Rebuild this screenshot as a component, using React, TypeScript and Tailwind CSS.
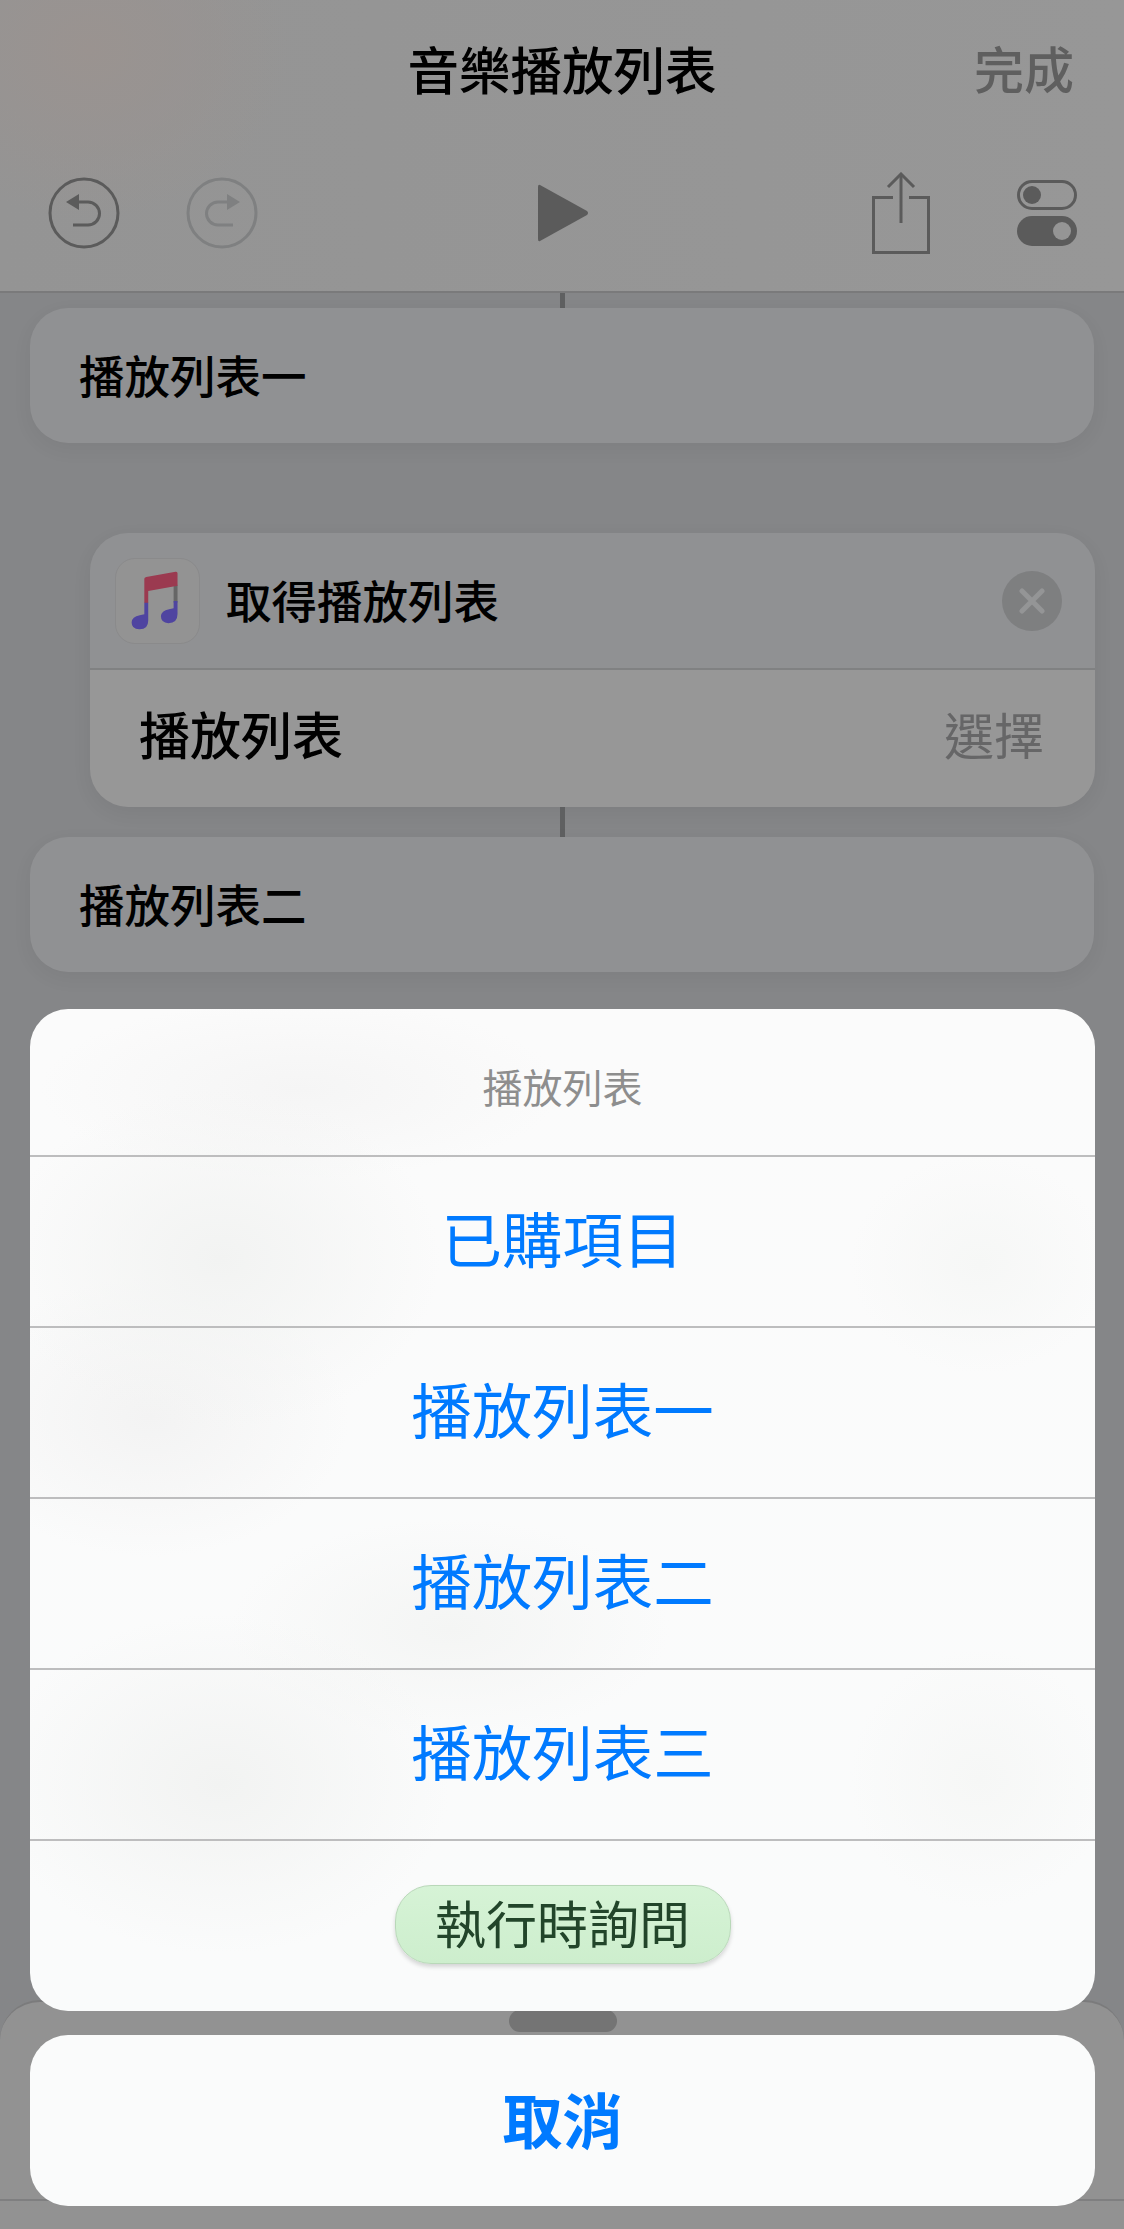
const sans = "font-['Noto_Sans_CJK_TC','Noto_Sans',sans-serif]";

function UndoIcon({ flip, color }: { flip?: boolean; color: string }) {
  return (
    <svg width="72" height="72" viewBox="0 0 72 72" fill="none" stroke={color} strokeWidth="3" className={flip ? "-scale-x-100" : ""}>
      <circle cx="36" cy="36" r="34" />
      <path d="M24 25 H40 a11.500 11.500 0 0 1 0 23 H25" />
      <path d="M18 25 L31 17 V33 Z" fill={color} stroke="none" />
    </svg>
  );
}

function ShareIcon() {
  return (
    <svg width="58" height="82" viewBox="0 0 58 82" fill="none" stroke="#5b5b5b" strokeWidth="3">
      <path d="M21 25.500 H1.500 V80.500 H56.500 V25.500 H37" />
      <path d="M29 2 V51" />
      <path d="M16 15 L29 2 L42 15" />
    </svg>
  );
}

function TogglesIcon() {
  return (
    <svg width="60" height="66" viewBox="0 0 60 66" fill="none">
      <rect x="1.500" y="1.500" width="57" height="27" rx="13.500" stroke="#5b5b5b" strokeWidth="3" />
      <circle cx="15" cy="15" r="9" fill="#5b5b5b" />
      <rect x="0" y="36" width="60" height="30" rx="15" fill="#5b5b5b" />
      <circle cx="45" cy="51" r="9" fill="#959595" />
    </svg>
  );
}

function MusicIcon() {
  return (
    <div className="w-[85px] h-[86px] rounded-[20px] bg-[#939393] border border-[#8a8a8b] flex items-center justify-center shrink-0">
      <svg width="85" height="86" viewBox="45 52 255 256">
        <rect x="222" y="130" width="12" height="55" fill="#666666" />
        <path d="M132 186 V112 Q132 107 138 106 L228 90 Q234 89 234 95 V133 L144 149 V186 Z" fill="#9b3a50" />
        <path d="M132 185 H144 V240 Q144 268 116 267 Q93 266 93 246 Q94 228 118 224 L132 221 Z" fill="#4f44a0" />
        <path d="M222 180 H234 V220 Q234 248 206 248 Q183 247 183 227 Q184 209 208 205 L222 202 Z" fill="#4f44a0" />
      </svg>
    </div>
  );
}

function VariableCard({ label, className }: { label: string; className?: string }) {
  return (
    <div className={`mx-[30px] h-[135px] rounded-[38px] bg-[#909193] shadow-[0_6px_20px_rgba(0,0,0,0.05)] flex items-center pl-[49px] pb-[2px] text-[45.500px] font-medium text-black ${className ?? ""}`}>
      {label}
    </div>
  );
}

function Connector({ height }: { height: string }) {
  return <div className={`w-[5px] mx-auto bg-[#5f6061] ${height}`} />;
}

function SheetRow({ label }: { label: string }) {
  return (
    <div className="h-[171px] border-t-2 border-[#bdbdbe] flex items-center justify-center pb-[8px] text-[60.500px] text-[#007aff]">
      {label}
    </div>
  );
}

export default function App() {
  return (
    <div className={`relative w-[1124px] h-[2229px] overflow-hidden bg-[#858688] ${sans}`}>
      {/* header */}
      <div className="h-[293px] border-b-2 border-[#7a7a7b] bg-[radial-gradient(ellipse_200px_170px_at_90px_50px,#9a9390,transparent),linear-gradient(90deg,#949494,#979797)]">
        <div className="relative h-[140px] flex items-center justify-center pb-[4px]">
          <span className="text-[51.500px] font-medium text-black">音樂播放列表</span>
          <span className="absolute right-[50px] pb-[2px] text-[50px] font-medium text-[#5f5f5f]">完成</span>
        </div>
        <div className="grid grid-cols-[1fr_auto_1fr] items-center pl-[48px] pr-[47px] pt-[32px]">
          <div className="flex gap-[66px]">
            <UndoIcon color="#5b5b5b" />
            <UndoIcon flip color="#7f8081" />
          </div>
          <svg width="52" height="58" viewBox="0 0 52 58">
            <path d="M1 3 Q1 0 3 1 L50 27 Q52 29 50 31 L3 57 Q1 58 1 55 Z" fill="#5b5b5b" />
          </svg>
          <div className="flex justify-end items-center gap-[87px]">
            <ShareIcon />
            <TogglesIcon />
          </div>
        </div>
      </div>

      {/* shortcut steps */}
      <Connector height="h-[15px]" />
      <VariableCard label="播放列表一" />
      <div className="ml-[90px] mr-[29px] mt-[90px] rounded-[38px] overflow-hidden shadow-[0_6px_20px_rgba(0,0,0,0.06)]">
        <div className="h-[135px] bg-[#909193] flex items-center pl-[25px] pr-[33px] gap-[26px]">
          <MusicIcon />
          <span className="flex-1 pb-[3px] text-[45.500px] font-medium text-black">取得播放列表</span>
          <div className="relative w-[60px] h-[60px] rounded-full bg-[#7e7f80] flex items-center justify-center">
            <svg width="26" height="26" viewBox="0 0 26 26" stroke="#949596" strokeWidth="5" strokeLinecap="round">
              <path d="M3 3 L23 23 M23 3 L3 23" />
            </svg>
          </div>
        </div>
        <div className="h-[139px] border-t-2 border-[#808182] bg-[#979797] flex items-center justify-between pl-[49px] pr-[51px] pb-[11px]">
          <span className="text-[51px] font-medium text-black">播放列表</span>
          <span className="text-[50px] text-[#666667]">選擇</span>
        </div>
      </div>
      <Connector height="h-[30px]" />
      <VariableCard label="播放列表二" />

      {/* drawer behind the sheet */}
      <div className="absolute left-0 right-0 top-[2000px] h-[229px] rounded-t-[40px] bg-[#929292] border-t-2 border-[#7b7b7c]">
        <div className="mt-[197px] border-t-2 border-[#7f7f80]" />
      </div>
      <div className="absolute left-[509px] top-[2010px] w-[108px] h-[22px] rounded-[11px] bg-[#747474]" />

      {/* action sheet */}
      <div className="absolute left-[30px] top-[1009px] w-[1065px] h-[1002px] rounded-[38px] overflow-hidden bg-[radial-gradient(ellipse_220px_170px_at_190px_250px,#f2f3f2,transparent),radial-gradient(ellipse_200px_140px_at_120px_408px,#f3f3f3,transparent),radial-gradient(ellipse_230px_170px_at_190px_775px,#f2f3f2,transparent),radial-gradient(ellipse_260px_90px_at_270px_80px,#f5f5f5,transparent),radial-gradient(ellipse_220px_110px_at_420px_620px,#f4f5f4,transparent),radial-gradient(ellipse_130px_110px_at_950px_255px,#f6f7f6,transparent),radial-gradient(ellipse_130px_130px_at_950px_770px,#f6f7f6,transparent),linear-gradient(#fbfbfb,#fafbfb)]">
        <div className="h-[146px] flex items-center justify-center text-[40px] text-[#8e8e8e] pt-[8px]">播放列表</div>
        <SheetRow label="已購項目" />
        <SheetRow label="播放列表一" />
        <SheetRow label="播放列表二" />
        <SheetRow label="播放列表三" />
        <div className="h-[172px] border-t-2 border-[#bdbdbe] flex items-center justify-center pb-[3px]">
          <div className="w-[336px] h-[79px] rounded-[36px] border border-[#b9d8b9] bg-[linear-gradient(#d6f3d6,#cdeecd)] shadow-[0_3px_4px_rgba(0,0,0,0.15)] flex items-center justify-center pb-[5px] text-[51px] text-[#22452a]">
            執行時詢問
          </div>
        </div>
      </div>
      <div className="absolute left-[30px] top-[2035px] w-[1065px] h-[171px] rounded-[38px] bg-[#fafbfb] flex items-center justify-center pb-[5px] text-[60px] font-semibold text-[#007aff]">
        取消
      </div>
    </div>
  );
}
